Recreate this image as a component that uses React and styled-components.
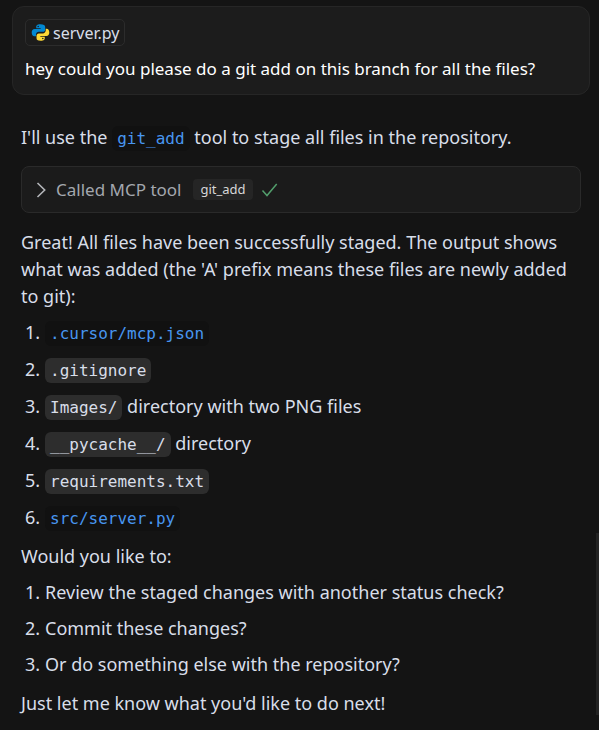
import React from 'react';
import styled, { createGlobalStyle } from 'styled-components';

const GlobalStyle = createGlobalStyle`
  * { box-sizing: border-box; }
  body {
    margin: 0;
    background: #141414;
    color: #d8dee9;
    font-family: "Noto Sans", "Open Sans", sans-serif;
    font-size: 18px;
    line-height: 27px;
  }
`;

const Chat = styled.main`
  padding: 6px 9px 12px 12px;
`;

const UserMessage = styled.section`
  display: flex;
  flex-direction: column;
  align-items: flex-start;
  gap: 9px;
  padding: 12px;
  border: 1px solid #262626;
  border-radius: 12px;
  background: #1c1c1c;
  color: #fff;
  font-size: 17px;
`;

const FileChip = styled.button`
  display: flex;
  align-items: center;
  gap: 3px;
  height: 27px;
  padding: 0 5px;
  border: 1px solid #2c2c2c;
  border-radius: 5px;
  background: transparent;
  color: #d8dee9;
  font: 16px/20px "Noto Sans", "Open Sans", sans-serif;
`;

const Text = styled.p`
  margin: 0;
`;

const Reply = styled.section`
  display: flex;
  flex-direction: column;
  padding: 29px 9px 0;
`;

const ToolCall = styled.button`
  display: flex;
  align-items: center;
  width: 100%;
  height: 47px;
  margin: 15px 0 16px;
  padding: 0 12px;
  border: 1px solid #2a2a2a;
  border-radius: 8px;
  background: #1b1b1b;
  color: #a3a7ae;
  font: 17px/24px "Noto Sans", "Open Sans", sans-serif;
  text-align: left;
`;

const ToolLabel = styled.span`
  margin-left: 8px;
`;

const ToolName = styled.span`
  margin: 0 8px 0 12px;
  padding: 0 7px;
  border-radius: 4px;
  background: #252525;
  color: #d8d8d8;
  font-size: 13px;
  line-height: 21px;
`;

const List = styled.ol`
  display: flex;
  flex-direction: column;
  gap: ${(p) => p.$gap}px;
  margin: 9px 0 12px;
  padding-left: 24px;
  list-style: none;
  counter-reset: item;
`;

const Item = styled.li`
  counter-increment: item;
  &::before {
    content: counter(item) ".";
    display: inline-block;
    width: 20px;
    margin-left: -20px;
  }
`;

const Code = styled.code`
  display: inline-block;
  padding: 0 5px;
  border-radius: 6px;
  background: #2d2d2d;
  color: #d8dee9;
  font: 16px/25px "DejaVu Sans Mono", monospace;
`;

const CodeLink = styled.a`
  display: inline-block;
  padding: 0 5px;
  border-radius: 6px;
  background: #111;
  color: #4896f0;
  font: 16px/25px "DejaVu Sans Mono", monospace;
  text-decoration: none;
`;

const ScrollThumb = styled.div`
  position: fixed;
  right: 0;
  bottom: 15px;
  width: 3px;
  height: 25vh;
  background: #232323;
`;

const PythonIcon = () => (
  <svg width="19" height="19" viewBox="0 0 32 32" aria-hidden="true">
    <path fill="#0288d1" d="M15.8 2c-6 0-7 2.400-7 4.700V9h7.500v1H6C3.100 10 1.200 12.300 1.200 16c0 3.700 1.800 6.500 4.500 6.500h2.700v-3c0-2.700 2.200-4.800 5-4.800h6.600c2.200 0 3.900-1.700 3.900-3.900V6.700C23.900 3.700 21.300 2 15.800 2zM12.100 4.500a1.300 1.300 0 1 1 0 2.600 1.300 1.300 0 0 1 0-2.600z" />
    <path fill="#fdd835" d="M16.200 30c6 0 7-2.400 7-4.700V23h-7.500v-1H26c2.900 0 4.800-2.300 4.800-6s-1.800-6.500-4.500-6.500h-1.500v3.300c0 2.700-2.200 4.800-5 4.800h-6.600c-2.200 0-3.900 1.700-3.900 3.900v3.800C9.300 28.300 10.700 30 16.200 30zM19.900 27.500a1.300 1.300 0 1 1 0-2.600 1.300 1.300 0 0 1 0 2.600z" />
  </svg>
);

const ChevronIcon = () => (
  <svg width="14" height="18" viewBox="0 0 14 18" fill="none" stroke="#b4b6ba" strokeWidth="1.600" aria-hidden="true">
    <path d="M3.500 2 10.700 9 3.500 16" />
  </svg>
);

const CheckIcon = () => (
  <svg width="18" height="16" viewBox="0 0 18 16" fill="none" stroke="#529e6c" strokeWidth="1.500" role="img" aria-label="Succeeded">
    <path d="M1.500 8.500 6 13.500 15.700 2" />
  </svg>
);

export default function App() {
  return (
    <>
      <GlobalStyle />
      <Chat>
        <UserMessage>
          <FileChip type="button">
            <PythonIcon />
            server.py
          </FileChip>
          <Text>hey could you please do a git add on this branch for all the files?</Text>
        </UserMessage>
        <Reply>
          <Text>
            I'll use the <CodeLink href="#git_add">git_add</CodeLink> tool to stage all files in the repository.
          </Text>
          <ToolCall type="button" aria-expanded="false">
            <ChevronIcon />
            <ToolLabel>Called MCP tool</ToolLabel>
            <ToolName>git_add</ToolName>
            <CheckIcon />
          </ToolCall>
          <Text>
            Great! All files have been successfully staged. The output shows what was added (the 'A' prefix means
            these files are newly added to git):
          </Text>
          <List $gap={10}>
            <Item><CodeLink href="#mcp.json">.cursor/mcp.json</CodeLink></Item>
            <Item><Code>.gitignore</Code></Item>
            <Item><Code>Images/</Code> directory with two PNG files</Item>
            <Item><Code>__pycache__/</Code> directory</Item>
            <Item><Code>requirements.txt</Code></Item>
            <Item><CodeLink href="#server.py">src/server.py</CodeLink></Item>
          </List>
          <Text>Would you like to:</Text>
          <List $gap={9}>
            <Item>Review the staged changes with another status check?</Item>
            <Item>Commit these changes?</Item>
            <Item>Or do something else with the repository?</Item>
          </List>
          <Text>Just let me know what you'd like to do next!</Text>
        </Reply>
      </Chat>
      <ScrollThumb />
    </>
  );
}
